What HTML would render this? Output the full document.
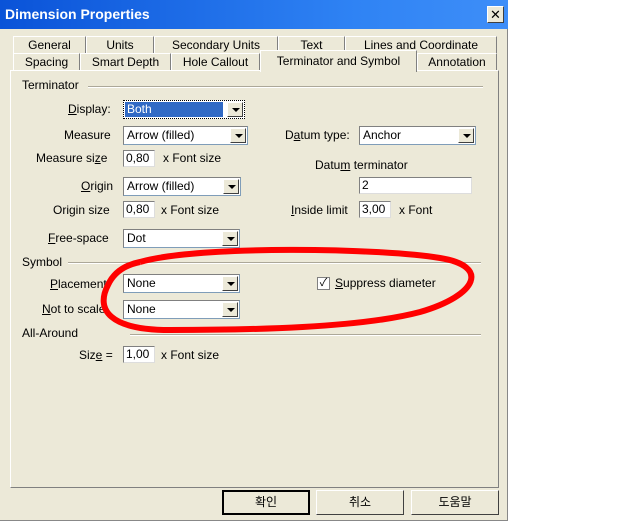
<!DOCTYPE html>
<html><head><meta charset="utf-8"><style>
*{margin:0;padding:0;box-sizing:border-box}
body{width:640px;height:521px;background:#fff;position:relative;overflow:hidden;font:12px "Liberation Sans","Noto Sans CJK KR",sans-serif;color:#000}
.dlg{position:absolute;left:0;top:0;width:508px;height:521px;background:#ece9d8;border-right:1px solid #888;border-bottom:1px solid #888}
.title{position:absolute;left:0;top:0;width:508px;height:29px;background:linear-gradient(90deg,#0a53d8,#2f83f4 70%,#3e8ef8);color:#fff;font-weight:bold;font-size:14px;padding:6px 0 0 5px}
.x{position:absolute;left:487px;top:6px;width:17px;height:17px;background:#ece9d8;border:1px solid #fff;border-right-color:#404040;border-bottom-color:#404040;color:#000;font-size:13px;text-align:center;line-height:15px}
.a{position:absolute;white-space:nowrap}
.tab{position:absolute;height:18px;border:1px solid #fff;border-right-color:#808080;border-bottom:none;background:#ece9d8;text-align:center;line-height:17px}
.panel{position:absolute;left:10px;top:70px;width:489px;height:418px;border:1px solid #fff;border-right-color:#808080;border-bottom-color:#808080}
.cb{position:absolute;height:19px;background:#fff;border:1px solid #7f9db9;border-top-color:#808080;border-left-color:#808080;padding:1px 3px;line-height:15px}
.cb i{position:absolute;right:1px;top:1px;width:16px;height:15px;background:#ece9d8;border:1px solid #fff;border-right-color:#404040;border-bottom-color:#404040}
.cb i:after{content:"";position:absolute;left:4px;top:5px;border:4px solid transparent;border-top:4px solid #000;border-bottom:0}
.in{position:absolute;height:17px;background:#fff;border:1px solid #808080;border-right-color:#ddd;border-bottom-color:#ddd;padding:0 2px;line-height:15px}
.ln{position:absolute;height:2px;border-top:1px solid #aca899;border-bottom:1px solid #fff}
.btn{position:absolute;top:490px;width:88px;height:25px;border:1px solid #fff;border-right-color:#404040;border-bottom-color:#404040;text-align:center;line-height:22px;background:#ece9d8}
u{text-decoration:underline}
</style></head><body>
<div class="dlg">
<div class="title">Dimension Properties</div><div class="x">✕</div>
<div class="tab" style="left:13px;top:36px;width:73px">General</div>
<div class="tab" style="left:86px;top:36px;width:68px">Units</div>
<div class="tab" style="left:154px;top:36px;width:124px">Secondary Units</div>
<div class="tab" style="left:278px;top:36px;width:67px">Text</div>
<div class="tab" style="left:345px;top:36px;width:152px">Lines and Coordinate</div>
<div class="tab" style="left:13px;top:53px;width:67px">Spacing</div>
<div class="tab" style="left:80px;top:53px;width:91px">Smart Depth</div>
<div class="tab" style="left:171px;top:53px;width:89px">Hole Callout</div>
<div class="tab" style="left:417px;top:53px;width:80px">Annotation</div>
<div class="panel"></div>
<div class="tab" style="left:260px;top:50px;width:157px;height:22px;z-index:2;line-height:20px">Terminator and Symbol</div>

<div class="a" style="left:22px;top:78px">Terminator</div><div class="ln" style="left:88px;top:86px;width:395px"></div>
<div class="a" style="left:68px;top:102px"><u>D</u>isplay:</div>
<div class="cb" style="left:123px;top:100px;width:122px;border:1px dotted #000"><span style="background:#316ac5;color:#fff;display:block;width:98px;padding-left:2px;margin-left:-2px">Both</span><i></i></div>
<div class="a" style="left:64px;top:128px">Measure</div>
<div class="cb" style="left:123px;top:126px;width:125px">Arrow (filled)<i></i></div>
<div class="a" style="left:285px;top:128px">D<u>a</u>tum type:</div>
<div class="cb" style="left:359px;top:126px;width:117px">Anchor<i></i></div>
<div class="a" style="left:36px;top:151px">Measure si<u>z</u>e</div>
<div class="in" style="left:123px;top:150px;width:32px">0,80</div>
<div class="a" style="left:163px;top:151px">x Font size</div>
<div class="a" style="left:315px;top:158px">Datu<u>m</u> terminator</div>
<div class="in" style="left:359px;top:177px;width:113px">2</div>
<div class="a" style="left:81px;top:179px"><u>O</u>rigin</div>
<div class="cb" style="left:123px;top:177px;width:118px">Arrow (filled)<i></i></div>
<div class="a" style="left:53px;top:203px">Origin size</div>
<div class="in" style="left:123px;top:201px;width:32px">0,80</div>
<div class="a" style="left:161px;top:203px">x Font size</div>
<div class="a" style="left:291px;top:203px"><u>I</u>nside limit</div>
<div class="in" style="left:359px;top:201px;width:32px">3,00</div>
<div class="a" style="left:399px;top:203px">x Font</div>
<div class="a" style="left:48px;top:231px"><u>F</u>ree-space</div>
<div class="cb" style="left:123px;top:229px;width:117px">Dot<i></i></div>

<div class="a" style="left:22px;top:255px">Symbol</div><div class="ln" style="left:68px;top:262px;width:413px"></div>
<div class="a" style="left:50px;top:277px"><u>P</u>lacement:</div>
<div class="cb" style="left:123px;top:274px;width:117px">None<i></i></div>
<div style="position:absolute;left:317px;top:277px;width:13px;height:13px;background:#fff;border:1px solid #808080;font-size:11px;line-height:11px;text-align:center">✓</div>
<div class="a" style="left:335px;top:276px"><u>S</u>uppress diameter</div>
<div class="a" style="left:42px;top:302px"><u>N</u>ot to scale:</div>
<div class="cb" style="left:123px;top:300px;width:117px">None<i></i></div>
<div class="a" style="left:22px;top:326px">All-Around</div><div class="ln" style="left:130px;top:334px;width:351px"></div>
<div class="a" style="left:79px;top:348px">Siz<u>e</u> =</div>
<div class="in" style="left:123px;top:346px;width:32px">1,00</div>
<div class="a" style="left:161px;top:348px">x Font size</div>

<div class="btn" style="left:222px;border:2px solid #000;line-height:20px">확인</div>
<div class="btn" style="left:316px">취소</div>
<div class="btn" style="left:411px">도움말</div>
</div>
<svg style="position:absolute;left:0;top:0" width="640" height="521"><path d="M140,262 C200,245 380,248 440,258 C490,266 478,295 420,312 C360,328 250,330 170,330 C110,330 95,310 108,285 C114,272 125,265 140,262" fill="none" stroke="#f00" stroke-width="6"/></svg>
</body></html>
